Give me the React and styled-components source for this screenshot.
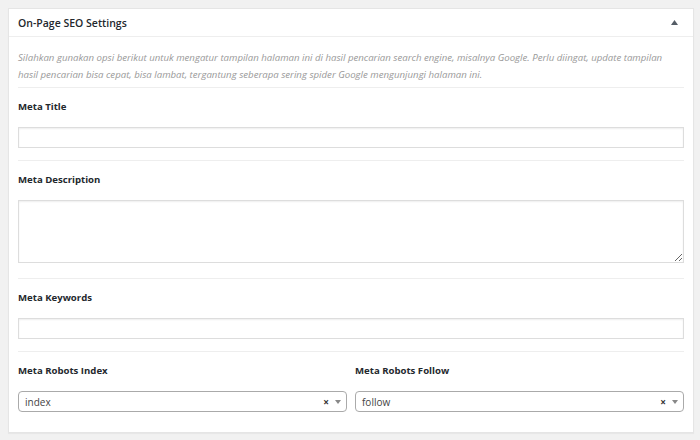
import styled, { createGlobalStyle } from "styled-components";

const GlobalStyle = createGlobalStyle`
  html, body {
    margin: 0;
    padding: 0;
    background: #f1f1f1;
    font-family: "Open Sans", "Noto Sans", sans-serif;
  }
`;

const Page = styled.div`
  padding: 8px 6px 8px 8px;
`;

const Postbox = styled.div`
  width: 686px;
  box-sizing: border-box;
  background: #fff;
  border: 1px solid #e5e5e5;
  box-shadow: 0 1px 1px rgba(0, 0, 0, 0.04);
`;

const Header = styled.div`
  height: 27px;
  display: flex;
  align-items: center;
  justify-content: space-between;
  padding: 0 9px;
  border-bottom: 1px solid #eee;
`;

const Title = styled.h2`
  margin: 0;
  font-size: 10.5px;
  font-weight: 600;
  color: #23282d;
`;

const Toggle = styled.button`
  border: 0;
  background: none;
  padding: 0;
  width: 12px;
  height: 12px;
  display: flex;
  align-items: center;
  justify-content: center;
  margin-right: 4px;
`;

const Inside = styled.div`
  padding: 0 9px 20px;
`;

const Description = styled.p`
  margin: 0;
  padding: 12px 0 4px;
  font-size: 9.65px;
  line-height: 17px;
  font-style: italic;
  color: #999;
  border-bottom: 1px solid #eee;
`;

const Field = styled.div`
  padding-top: 12px;
  padding-bottom: ${({ last }) => (last ? "0" : "12px")};
  border-bottom: ${({ last }) => (last ? "none" : "1px solid #eee")};
`;

const Label = styled.label`
  display: block;
  height: 14px;
  line-height: 14px;
  margin-bottom: 13px;
  font-size: 9.6px;
  font-weight: 700;
  color: #23282d;
`;

const TextInput = styled.input`
  display: block;
  width: 100%;
  height: 21px;
  box-sizing: border-box;
  margin: 0;
  border: 1px solid #ddd;
  box-shadow: inset 0 1px 2px rgba(0, 0, 0, 0.07);
  background: #fff;
  font-family: inherit;
  font-size: 10px;
  outline: none;
`;

const TextArea = styled.textarea`
  display: block;
  width: 100%;
  height: 63px;
  box-sizing: border-box;
  margin: 0 0 3px;
  border: 1px solid #ddd;
  box-shadow: inset 0 1px 2px rgba(0, 0, 0, 0.07);
  background: #fff;
  font-family: inherit;
  font-size: 10px;
  outline: none;
`;

const Columns = styled.div`
  display: grid;
  grid-template-columns: 1fr 1fr;
  column-gap: 8px;
`;

const Select = styled.div`
  height: 21px;
  box-sizing: border-box;
  display: flex;
  align-items: center;
  padding: 0 5px 0 6px;
  border: 1px solid #aaa;
  border-radius: 4px;
  background: #fff;
`;

const SelectValue = styled.span`
  flex: 1;
  font-size: 10px;
  color: #444;
`;

const Clear = styled.span`
  font-size: 10px;
  font-weight: 700;
  color: #333;
  margin-right: 6px;
  line-height: 1;
`;

const Arrow = styled.span`
  width: 0;
  height: 0;
  border-left: 3.5px solid transparent;
  border-right: 3.5px solid transparent;
  border-top: 4px solid #888;
  margin-top: 1px;
`;

function SelectBox({ value }) {
  return (
    <Select>
      <SelectValue>{value}</SelectValue>
      <Clear>×</Clear>
      <Arrow />
    </Select>
  );
}

export default function App() {
  return (
    <Page>
      <GlobalStyle />
      <Postbox>
        <Header>
          <Title>On-Page SEO Settings</Title>
          <Toggle aria-label="Toggle panel">
            <svg width="7" height="5" viewBox="0 0 7 5">
              <path d="M3.5 0 L7 5 L0 5 Z" fill="#555d66" />
            </svg>
          </Toggle>
        </Header>
        <Inside>
          <Description>
            Silahkan gunakan opsi berikut untuk mengatur tampilan halaman ini di
            hasil pencarian search engine, misalnya Google. Perlu diingat, update
            tampilan hasil pencarian bisa cepat, bisa lambat, tergantung seberapa
            sering spider Google mengunjungi halaman ini.
          </Description>
          <Field>
            <Label>Meta Title</Label>
            <TextInput type="text" />
          </Field>
          <Field>
            <Label>Meta Description</Label>
            <TextArea />
          </Field>
          <Field>
            <Label>Meta Keywords</Label>
            <TextInput type="text" />
          </Field>
          <Field last>
            <Columns>
              <div>
                <Label>Meta Robots Index</Label>
                <SelectBox value="index" />
              </div>
              <div>
                <Label>Meta Robots Follow</Label>
                <SelectBox value="follow" />
              </div>
            </Columns>
          </Field>
        </Inside>
      </Postbox>
    </Page>
  );
}
